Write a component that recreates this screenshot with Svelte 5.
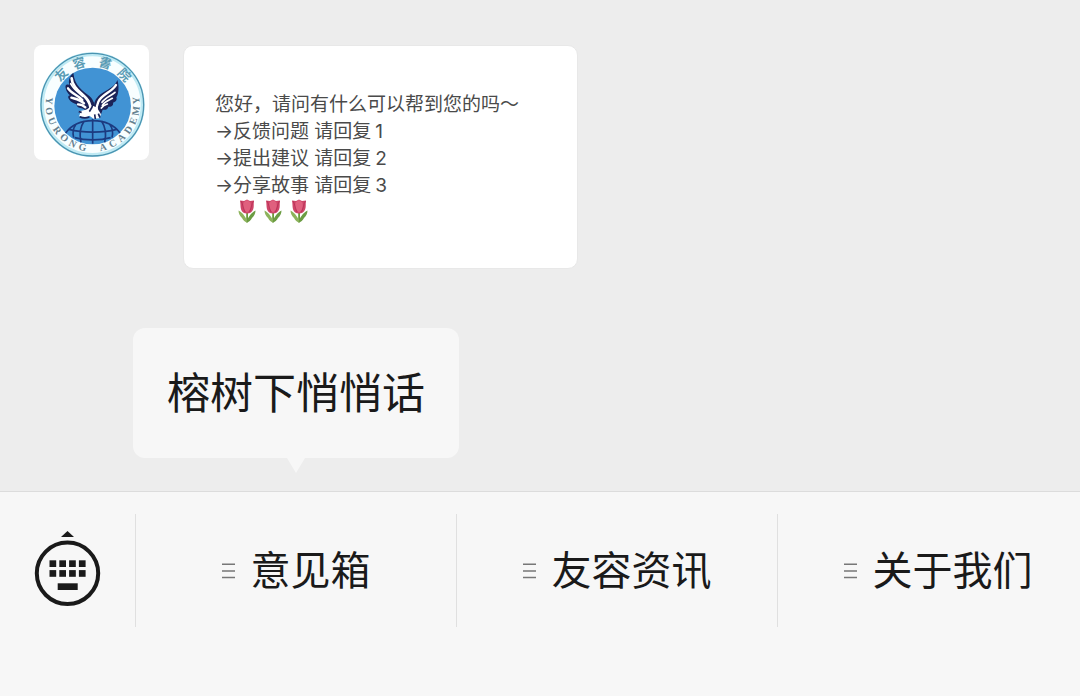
<script lang="ts">
  const replies = ['反馈问题', '提出建议', '分享故事'];
  const tabs = [
    { label: '意见箱', submenu: '榕树下悄悄话' },
    { label: '友容资讯' },
    { label: '关于我们' }
  ];

  // Lettering around the crest, each glyph turned about its centre
  const crestTop = [
    { char: '友', angle: -46 },
    { char: '容', angle: -18 },
    { char: '書', angle: 17 },
    { char: '院', angle: 47 }
  ];
  const crestBottom = [...'YOURONG ACADEMY'].map((char, i) => ({ char, angle: 95 - i * 13.6 }));

  let openTab = $state(0);

  function toggle(i: number) {
    openTab = openTab === i ? -1 : i;
  }
</script>

<div class="page">
  <main class="chat">
    <svg class="avatar" viewBox="28 28 345 345" role="img" aria-label="友容書院">
      <rect x="28" y="28" width="345" height="345" fill="#fff" />
      <circle cx="203" cy="207" r="151" fill="#f8feff" stroke="#bfeaf4" stroke-width="12" />
      <circle cx="203" cy="207" r="154" fill="none" stroke="#4a93b0" stroke-width="4" />
      <circle cx="204" cy="211" r="115" fill="#4193d4" />
      <!-- globe -->
      <g fill="none" stroke="#1c3b80" stroke-width="5">
        <path d="M123 292C142 266 170 255 204 255s64 12 82 37" />
        <path d="M133 281c40 11 103 11 143 0M150 306c32 9 76 9 108 0" />
        <path d="M204 250v74M178 257c-12 18-14 41-9 63M231 257c12 18 14 41 9 63" />
        <path d="M153 267c-9 12-9 27-6 39M256 267c9 12 9 27 6 39" />
      </g>
      <!-- eagle: dark wing backs, then the white feathers -->
      <g fill="#1b2358">
        <path d="M146 111c-13 12-15 25-12 37-10-4-13 1-11 10 2 10 7 16 13 21-6 1-7 6-3 12 6 9 14 13 23 15-1 7 6 11 15 12 9 2 13 7 15 16l22-3c5-20 0-37-13-49-20-17-45-30-49-71z" />
        <path d="M278 133c-6 16-19 24-34 32-17 9-31 21-35 37l-4 30 23 7 6-17c10 2 16-2 17-9 11 1 16-5 14-12 9-2 13-9 10-16 7-9 9-34 3-52z" />
      </g>
      <g fill="none" stroke="#fff" stroke-linecap="round">
        <path stroke-width="8" d="M141 128c1 26 26 41 43 59 9 10 13 21 14 33" />
        <path stroke-width="7" d="M130 158c10 16 30 20 43 35M140 186c14 4 27 6 38 17M160 206c9 0 16 3 22 9" />
        <path stroke-width="5" d="M138 144c9 18 23 26 36 38" />
        <path stroke-width="7" d="M274 148c-10 20-43 28-53 50-4 9-6 18-5 28" />
        <path stroke-width="5" d="M271 170c-12 11-29 15-39 30M263 188c-11 6-23 10-30 21M248 205c-8 2-14 6-18 12" />
      </g>
      <path fill="#fff" d="M199 208c-3 8-9 12-18 15-7 2-14 3-20 5l6 4-4 10c15 3 24 3 31-2l13 9 17-1 5-12c-4-9-8-12-11-20z" />
      <path fill="none" stroke="#1b2358" stroke-width="5" d="M206 200c-2 12-6 21-12 28M165 243c9 4 18 5 29 1M210 236l2 14M221 234l5 12M162 228l9 2" />
      <g class="crest-top">
        {#each crestTop as { char, angle }}
          <text x="204" y="90" transform="rotate({angle} 204 207)">{char}</text>
        {/each}
      </g>
      <g class="crest-bottom">
        {#each crestBottom as { char, angle }}
          <text x="204" y="348" transform="rotate({angle} 204 207)">{char}</text>
        {/each}
      </g>
    </svg>

    <div class="message">
      <p>您好，请问有什么可以帮到您的吗～</p>
      {#each replies as reply, i}
        <p class="reply">
          <span class="arrow">→</span>
          <span>{reply} 请回复</span>
          <span class="number">{i + 1}</span>
        </p>
      {/each}
      <div class="tulips">
        {#each [0, 1, 2] as tulip (tulip)}
          <svg width="20" height="24" viewBox="0 0 20 24" aria-hidden="true">
            <path d="M9.200 12h1.800v11H9.200z" fill="#6b9b3a" />
            <path d="M10.500 24C9.500 18.500 6 14 1.500 11.500c0 3 1.500 5.500 3.500 7.500 1 2 3 4 5.500 5z" fill="#8db35c" />
            <path d="M9.500 24c1-5.500 4.500-10 9-12.500 0 3-1.500 5.500-3.500 7.500-1 2-3 4-5.500 5z" fill="#6b9c42" />
            <path d="M3 1.500 7 2l3-1.500L13 2l4-.5c-.6 3.500.2 6-.8 8.700C15.300 13 13 14.500 10 14.500S4.700 13 4 10.200C3.300 7.500 3.700 5 3 1.500z" fill="#cf4568" />
            <path d="M6.500 3.500 10 1l3.500 2.500c.8 4 0 7.500-3.500 10-3.500-2.500-4.300-6-3.500-10z" fill="#e0607e" />
            <path d="M4 2c2 3 2 7 4 11M16.500 2c-2 3-2 7-4 11" fill="none" stroke="#b52f55" stroke-width=".8" />
          </svg>
        {/each}
      </div>
    </div>
  </main>

  <nav class="bar">
    <button type="button" class="keyboard" aria-label="切换键盘">
      <svg width="68" height="81" viewBox="0 0 68 81" fill="#1a1a1a">
        <path d="M33.500 1l6.500 6H27z" />
        <circle cx="33.500" cy="43.300" r="30.700" fill="none" stroke="#1a1a1a" stroke-width="4" />
        {#each [15.5, 25.3, 35.1, 44.9] as x}
          <rect {x} y="30.300" width="6.700" height="6.700" />
          <rect {x} y="40.100" width="6.700" height="6.700" />
        {/each}
        <rect x="23.700" y="53.300" width="20" height="6.700" />
      </svg>
    </button>

    {#each tabs as tab, i}
      <div class="tab">
        {#if tab.submenu && openTab === i}
          <button type="button" class="submenu">{tab.submenu}</button>
        {/if}
        <button type="button" class="tab-button" onclick={() => toggle(i)}>
          <svg width="13" height="16" viewBox="0 0 13 16" aria-hidden="true">
            <path d="M0 1.300h13M0 7.900h13M0 14.500h13" stroke="#777" stroke-width="1.500" />
          </svg>
          {tab.label}
        </button>
      </div>
    {/each}
  </nav>
</div>

<style>
  :global(body) {
    margin: 0;
    background: #ededed;
  }

  .page {
    display: flex;
    flex-direction: column;
    min-height: 100vh;
    font-family: Inter, 'Noto Sans CJK SC', sans-serif;
    color: #1a1a1a;
  }

  .chat {
    flex: 1;
    display: flex;
    align-items: flex-start;
    gap: 34px;
    padding: 45px 34px;
  }

  .avatar {
    flex: none;
    width: 115px;
    height: 115px;
    border-radius: 8px;
  }

  .crest-top,
  .crest-bottom {
    text-anchor: middle;
    font-weight: bold;
  }

  .crest-top {
    font-family: 'Noto Sans CJK TC', sans-serif;
    font-size: 38px;
    fill: #5a9cb5;
  }

  .crest-bottom {
    font-family: 'Liberation Serif', serif;
    font-size: 30px;
    fill: #64808f;
  }

  .message {
    padding: 45px 58px 42px 31px;
    border: 1px solid #e8e8e8;
    border-radius: 10px;
    background: #fff;
    color: #4a4a4a;
    font-size: 19px;
    line-height: 27px;
  }

  .message p {
    margin: 0;
  }

  .reply {
    display: flex;
  }

  .arrow {
    width: 18px;
  }

  .number {
    padding-left: 4px;
  }

  .tulips {
    display: flex;
    gap: 6px;
    height: 27px;
    padding-left: 22px;
  }

  .bar {
    display: grid;
    grid-template-columns: 135px 321fr 321fr 303fr;
    padding: 22px 0 69px;
    border-top: 1px solid #dcdcdc;
    background: #f7f7f7;
  }

  button {
    padding: 0;
    border: 0;
    background: none;
    color: inherit;
    font-family: inherit;
    cursor: pointer;
  }

  .keyboard {
    display: flex;
    align-items: center;
    justify-content: center;
    height: 113px;
  }

  .tab {
    position: relative;
    border-left: 1px solid #e0e0e0;
  }

  .tab:last-child {
    padding-left: 18px;
  }

  .tab-button {
    display: flex;
    align-items: center;
    justify-content: center;
    gap: 16px;
    width: 100%;
    height: 113px;
    font-size: 40px;
    line-height: 60px;
    white-space: nowrap;
  }

  .submenu {
    position: absolute;
    bottom: calc(100% + 56px);
    left: 50%;
    transform: translateX(-50%);
    padding: 33px 34px;
    border-radius: 12px;
    background: #f7f7f7;
    font-size: 43px;
    line-height: 64px;
    white-space: nowrap;
  }

  .submenu::after {
    content: '';
    position: absolute;
    top: 100%;
    left: 50%;
    margin-left: -9px;
    border: 9px solid transparent;
    border-top: 15px solid #f7f7f7;
    border-bottom: 0;
  }
</style>
